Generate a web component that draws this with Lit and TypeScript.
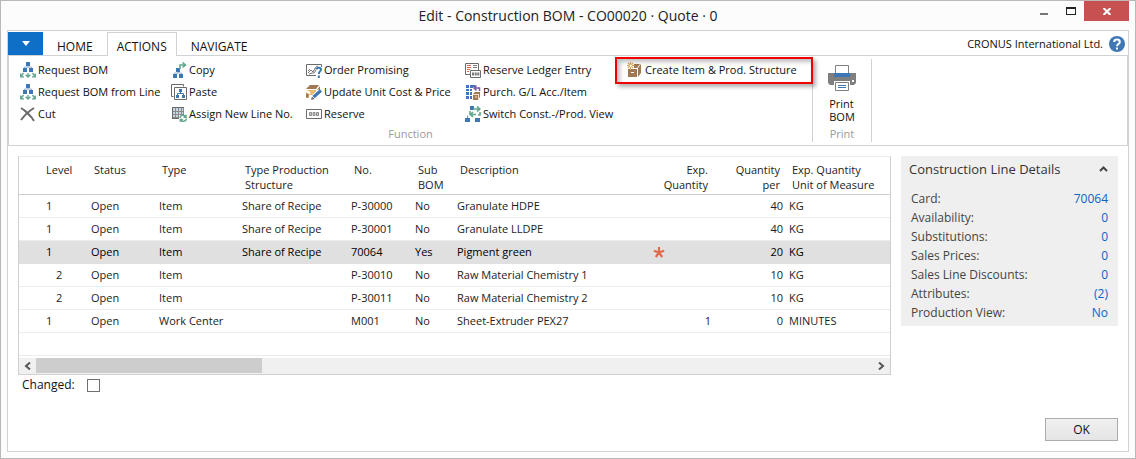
import { LitElement, html, css, svg, nothing } from "lit";
import { customElement, property } from "lit/decorators.js";
import { classMap } from "lit/directives/class-map.js";

const BLUE = "#3f77b5";
const GREEN = "#5fa58a";
const GREY = "#6b6b6b";
const BROWN = "#a07853";

const icons: Record<string, unknown> = {
  request: svg`
    <path fill=${BLUE} d="M6 0h4v4H6zM3 6h4v4H3zM9 6h4v4H9z"/>
    <path stroke="#8fb0d3" fill="none" d="M8 4v1.500M4.500 6V5h7v1"/>
    <path stroke=${GREEN} stroke-width="1.300" fill="none" d="M3.500 11L1 14.500M0.700 11.500v3.300h3.300M8 11v4M5.700 12.700L8 15l2.300-2.300M12.500 11l2.500 3.500M15.300 11.500v3.300H12"/>`,
  cut: svg`<path stroke=${GREY} stroke-width="2" fill="none" d="M1 2C6 5 11 10 14 15M14 2C9 5 4 10 1 14"/><path stroke=${GREY} stroke-width="1.500" d="M4 4l7 7"/>`,
  copy: svg`
    <path fill=${BLUE} d="M5 6h4v4H5zM2 12h4v4H2zM8 12h4v4H8z"/>
    <path stroke="#8fb0d3" fill="none" d="M7 10v1M3.500 12v-1h7v1"/>
    <path stroke=${GREEN} stroke-width="1.500" fill="none" d="M9 7V3h5M11.500 0.500L14.500 3L11.500 5.500"/>`,
  paste: svg`
    <path stroke=${GREY} fill="none" d="M2.500 12.500h-2V0.500h12v2"/>
    <path stroke=${GREY} fill="#fff" d="M3.500 3.500h12v12h-12z"/>
    <path fill=${BLUE} d="M8 5h3v3H8zM5 11h3v3H5zM11 11h3v3h-3z"/>
    <path stroke=${BLUE} fill="none" d="M9.500 8v1.500M6.500 11V9.500h6V11"/>`,
  assign: svg`
    <path fill="#c8d6e4" d="M1 2h12v9H1z"/>
    <path stroke="#8a8a8a" fill="none" d="M1.500 1.500h11v10h-11zM4.500 2v9M7.500 2v9M10.500 2v9M1.500 5.500h11M1.500 8.500h11"/>
    <path fill=${GREY} d="M1 1h12v1H1zM1 1h1v12H1zM1 12h7v1H1z"/>
    <path fill="#fff" d="M8 9h8v7H8z"/>
    <path stroke=${GREEN} stroke-width="1.400" fill="none" d="M9 12c0-3 4-3.500 5.500-1.500M15 8.800v2.400h-2.500M15.300 12.500c0 3-4 3.500-5.500 1.500M9.300 15.800v-2.400h2.500"/>`,
  promising: svg`
    <path stroke=${GREY} fill="#fff" d="M0.500 2.500h15v11h-15z"/>
    <path stroke="#777" fill="none" d="M2 11l3-3 2 2 3-5M10 5l2-1M2 9l2-2M3 12l3-1 2 0 2-3"/>
    <path fill="#fff" d="M10 5h6v11h-6z"/>
    <path stroke=${BLUE} stroke-width="2" fill="none" d="M10.500 7.500C10.500 5 15 5 15 7.500C15 9.500 12.800 9.300 12.800 12"/>
    <path fill=${BLUE} d="M11.800 13.500h2V16h-2z"/>`,
  update: svg`
    <path fill=${BROWN} d="M0 5L4 1h9l-3 4zM11 6l3-4v5z"/>
    <path fill="#e9b96e" d="M0 6h10v3l-5 5H0z"/>
    <path fill="#fff" d="M0 6l3 1 2 2-2 1-3-2zM3 11h3v5H3z"/>
    <path fill=${BROWN} d="M0 9l3 2-1 3-2-1z"/>
    <path stroke="#fff" stroke-width="5" d="M6 14.500L14 7"/>
    <path stroke=${BLUE} stroke-width="3" d="M7.500 13L15 6.500"/>
    <path fill=${GREY} d="M5 16l1-3.500 2.500 2.500z"/>`,
  reserve: svg`
    <path stroke=${GREY} fill="#fff" d="M0.500 3.500h15v9h-15z"/>
    <path stroke="#8a8a8a" fill="#ccc" d="M3.500 6.500h2v3h-2zM7 6.500h2v3H7zM10.500 6.500h2v3h-2z"/>`,
  ledger: svg`
    <path stroke=${GREY} fill="#fff" d="M0.500 1.500h13v11H0.500z"/>
    <path stroke="#d9694a" d="M2 3.500h4M2 5.500h4M2 7.500h3M2 9.500h2"/>
    <path stroke="#777" d="M8 3.500h4M8 5.500h4"/>
    <path stroke=${GREY} fill="#fff" d="M5.500 8.500h10v7h-10z"/>
    <path fill="#777" d="M7 10.500h2v3H7zM9.700 10.500h2v3h-2zM12.300 10.500h2v3h-2z"/>`,
  purch: svg`
    <path fill=${BLUE} d="M1 1h9v2H8v12H1z"/>
    <path stroke="#fff" d="M4.500 1v14M1 4.500h7M1 7.500h7M1 11.500h7"/>
    <path fill="#fff" d="M7 4h9v12H7z"/>
    <path fill="none" stroke="#7c57a5" stroke-width="1.500" d="M14.500 7V4H9M11.500 1.500L9 4l2.500 2.500"/>
    <path fill=${BROWN} d="M8 10l2-2h5v5l-2 3H8z"/>
    <path stroke="#f4e3cf" fill="none" d="M8 10.500h5M13.500 10v5M10 13h2"/>`,
  switch: svg`
    <path fill=${BLUE} d="M5 0h4v4H5zM0 12h5v4H0zM10 12h5v4h-5z"/>
    <path stroke="#6b95c4" fill="none" d="M2.500 12V9.500"/>
    <path stroke=${GREEN} stroke-width="1.600" fill="none" d="M8 3h6.500M12 0.500L14.800 3L12 5.500M5 5v3.500h6M8 6L5.500 8.500L8 11M15 6v3h-2"/>`,
  create: svg`
    <path fill=${BROWN} d="M1 7h9v8H1zM11 6l3-4v9l-3 4zM7 2h6l-3 4H7z"/>
    <path stroke="#fff" d="M4 10.500h3"/>
    <path fill="#fff" d="M1 1h6v6H1z"/>
    <path stroke="#dba24c" stroke-width="1.100" d="M3.500 0v2.500M3.500 5v2.500M0 3.500h2.500M5 3.500h2.500M1 1l1.800 1.800M6 1L4.400 2.600M1 6l1.800-1.800M6 6L4.400 4.400"/>`,
};

@customElement("ui-icon")
class UiIcon extends LitElement {
  @property() name = "";
  static styles = css`
    :host { display: block; flex: none; width: 16px; height: 16px; }
    svg { display: block; }
  `;
  render() {
    return html`<svg width="16" height="16" viewBox="0 0 16 16" aria-hidden="true">${icons[this.name]}</svg>`;
  }
}

interface Action { icon: string; label: string; marked?: boolean; }

const actionColumns: Action[][] = [
  [
    { icon: "request", label: "Request BOM" },
    { icon: "request", label: "Request BOM from Line" },
    { icon: "cut", label: "Cut" },
  ],
  [
    { icon: "copy", label: "Copy" },
    { icon: "paste", label: "Paste" },
    { icon: "assign", label: "Assign New Line No." },
  ],
  [
    { icon: "promising", label: "Order Promising" },
    { icon: "update", label: "Update Unit Cost & Price" },
    { icon: "reserve", label: "Reserve" },
  ],
  [
    { icon: "ledger", label: "Reserve Ledger Entry" },
    { icon: "purch", label: "Purch. G/L Acc./Item" },
    { icon: "switch", label: "Switch Const.-/Prod. View" },
  ],
  [{ icon: "create", label: "Create Item & Prod. Structure", marked: true }],
];

@customElement("action-ribbon")
class ActionRibbon extends LitElement {
  static styles = css`
    :host {
      display: flex;
      height: 89px;
      border: 1px solid #d2d2d2;
      border-top: none;
      background: #fff;
      font-size: 11px;
    }
    button {
      font: inherit;
      color: inherit;
      background: none;
      border: none;
      padding: 0;
      white-space: nowrap;
    }
    .group {
      display: flex;
      flex-direction: column;
      justify-content: space-between;
      margin: 3px 0;
      border-right: 1px solid #d2d2d2;
    }
    .columns {
      display: grid;
      grid-template-columns: 151px 135px 159px 162px 185px;
      padding-left: 11px;
    }
    .action {
      position: relative;
      display: flex;
      align-items: center;
      gap: 2px;
      height: 22px;
    }
    .marked { width: fit-content; }
    .marked::after {
      content: "";
      position: absolute;
      inset: -2px -16px -3px -12px;
      border: 2px solid #f00000;
      box-shadow: 3px 3px 4px rgba(0, 0, 0, 0.3), inset 3px 3px 4px rgba(0, 0, 0, 0.25);
    }
    .caption {
      line-height: 16px;
      text-align: center;
      color: #9a9a9a;
    }
    .print { width: 58px; }
    .large {
      display: flex;
      flex-direction: column;
      align-items: center;
      gap: 6px;
      line-height: 13px;
      padding-top: 6px;
      text-align: left;
    }
  `;
  render() {
    return html`
      <div class="group">
        <div class="columns">
          ${actionColumns.map(
            (column) => html`<div>
              ${column.map(
                (a) => html`<button class=${classMap({ action: true, marked: !!a.marked })}>
                  <ui-icon name=${a.icon}></ui-icon><span>${a.label}</span>
                </button>`
              )}
            </div>`
          )}
        </div>
        <div class="caption">Function</div>
      </div>
      <div class="group print">
        <button class="large">
          <svg width="28" height="26" viewBox="0 0 28 26" aria-hidden="true">
            <path fill="#7f7f7f" d="M0 8h28v10l-2 2H2l-2-2z" />
            <path fill="#fff" stroke="#7f7f7f" d="M7.500 0.500h13v9h-13z" />
            <path fill="#3f77b5" d="M6 8h16v4H6z" />
            <path fill="#fff" d="M24 15h2v2h-2zM6 16h16v5H6z" />
            <path fill="#fff" stroke="#7f7f7f" d="M7.500 17.500h13v8h-13z" />
            <path stroke="#3f77b5" d="M10 20.500h8M10 22.500h8" />
          </svg>
          <span>Print<br />BOM</span>
        </button>
        <div class="caption">Print</div>
      </div>
    `;
  }
}

interface Line {
  level: number; type: string; structure?: string; no: string; sub: string;
  description: string; expected?: string; per: string; unit: string; selected?: boolean;
}

const lines: Line[] = [
  { level: 1, type: "Item", structure: "Share of Recipe", no: "P-30000", sub: "No", description: "Granulate HDPE", per: "40", unit: "KG" },
  { level: 1, type: "Item", structure: "Share of Recipe", no: "P-30001", sub: "No", description: "Granulate LLDPE", per: "40", unit: "KG" },
  { level: 1, type: "Item", structure: "Share of Recipe", no: "70064", sub: "Yes", description: "Pigment green", per: "20", unit: "KG", selected: true },
  { level: 2, type: "Item", no: "P-30010", sub: "No", description: "Raw Material Chemistry 1", per: "10", unit: "KG" },
  { level: 2, type: "Item", no: "P-30011", sub: "No", description: "Raw Material Chemistry 2", per: "10", unit: "KG" },
  { level: 1, type: "Work Center", no: "M001", sub: "No", description: "Sheet-Extruder PEX27", expected: "1", per: "0", unit: "MINUTES" },
];

@customElement("bom-lines")
class BomLines extends LitElement {
  static styles = css`
    :host {
      display: block;
      border: 1px solid #cfcfcf;
      border-top-color: #ececec;
      color: #1c1c1c;
      font-size: 11px;
    }
    table {
      width: 100%;
      table-layout: fixed;
      border-collapse: separate;
      border-spacing: 0;
    }
    th, td {
      padding: 0 3px;
      text-align: left;
      font-weight: normal;
      white-space: nowrap;
      box-sizing: border-box;
    }
    th {
      height: 38px;
      padding: 5px 6px 2px;
      line-height: 15px;
      vertical-align: top;
      border-bottom: 1px solid #cfcfcf;
    }
    td { height: 23px; border-bottom: 1px solid #ececec; }
    .level { width: 69px; }
    .status { width: 68px; }
    .type { width: 83px; }
    .structure { width: 109px; }
    .no { width: 64px; }
    .sub { width: 42px; }
    .expected { width: 68px; }
    .per { width: 72px; }
    .unit { width: 104px; }
    th.level, td.level { padding-left: 27px; }
    td.nested { padding-left: 37px; }
    .number { text-align: right; }
    .selected td { background: #e0e0e0; border-bottom-color: #e0e0e0; color: #000; }
    .required { display: block; margin-left: 4px; }
    .scrollbar {
      display: flex;
      height: 16px;
      margin-top: 2px;
      background: #f0f0f0;
    }
    .arrow {
      display: grid;
      place-items: center;
      width: 17px;
      padding: 0;
      border: none;
      background: none;
    }
    .track { flex: 1; }
    .thumb { width: 27%; height: 15px; background: #cdcdcd; }
  `;
  render() {
    return html`
      <table>
        <thead>
          <tr>
            <th class="level">Level</th>
            <th class="status">Status</th>
            <th class="type">Type</th>
            <th class="structure">Type Production<br />Structure</th>
            <th class="no">No.</th>
            <th class="sub">Sub<br />BOM</th>
            <th>Description</th>
            <th class="expected number">Exp.<br />Quantity</th>
            <th class="per number">Quantity<br />per</th>
            <th class="unit">Exp. Quantity<br />Unit of Measure</th>
          </tr>
        </thead>
        <tbody>
          ${lines.map(
            (l) => html`<tr class=${classMap({ selected: !!l.selected })}>
              <td class=${classMap({ level: true, nested: l.level > 1 })}>${l.level}</td>
              <td>Open</td>
              <td>${l.type}</td>
              <td>${l.structure ?? nothing}</td>
              <td>${l.no}</td>
              <td>${l.sub}</td>
              <td>${l.description}</td>
              <td class="number">
                ${l.selected
                  ? html`<svg class="required" width="12" height="12" viewBox="0 0 12 12" role="img" aria-label="Required">
                      <path stroke="#e0694a" stroke-width="2.200" d="M6 6.500V1M6 6.500L0.800 4.700M6 6.500L11.200 4.700M6 6.500L2.800 11M6 6.500L9.200 11" />
                    </svg>`
                  : l.expected ?? nothing}
              </td>
              <td class="number">${l.per}</td>
              <td>${l.unit}</td>
            </tr>`
          )}
          <tr><td colspan="10"></td></tr>
        </tbody>
      </table>
      <div class="scrollbar">
        <button class="arrow" aria-label="Scroll left">
          <svg width="7" height="8" viewBox="0 0 7 8"><path fill="none" stroke="#555" stroke-width="2" d="M6 0.500L2 4l4 3.500" /></svg>
        </button>
        <div class="track"><div class="thumb"></div></div>
        <button class="arrow" aria-label="Scroll right">
          <svg width="7" height="8" viewBox="0 0 7 8"><path fill="none" stroke="#555" stroke-width="2" d="M1 0.500L5 4L1 7.500" /></svg>
        </button>
      </div>
    `;
  }
}

const facts: [string, string][] = [
  ["Card:", "70064"],
  ["Availability:", "0"],
  ["Substitutions:", "0"],
  ["Sales Prices:", "0"],
  ["Sales Line Discounts:", "0"],
  ["Attributes:", "(2)"],
  ["Production View:", "No"],
];

@customElement("line-details")
class LineDetails extends LitElement {
  static styles = css`
    :host { display: block; padding: 0 10px 4px; background: #efefef; color: #444; }
    header {
      display: flex;
      align-items: center;
      justify-content: space-between;
      height: 26px;
      margin: 0 0 7px -2px;
    }
    h2 { margin: 0; font-size: 13px; font-weight: normal; color: #333; }
    button { display: grid; padding: 0; border: none; background: none; }
    dl { margin: 0; }
    .fact { display: flex; justify-content: space-between; line-height: 19px; }
    dd { margin: 0; }
    a { color: #0b62cb; text-decoration: none; }
  `;
  render() {
    return html`
      <header>
        <h2>Construction Line Details</h2>
        <button aria-label="Collapse">
          <svg width="9" height="6" viewBox="0 0 9 6"><path fill="none" stroke="#444" stroke-width="2" d="M1 5l3.500-3.500L8 5" /></svg>
        </button>
      </header>
      <dl>
        ${facts.map(([k, v]) => html`<div class="fact"><dt>${k}</dt><dd><a href="#">${v}</a></dd></div>`)}
      </dl>
    `;
  }
}

@customElement("app-root")
class AppRoot extends LitElement {
  static styles = css`
    :host {
      display: flex;
      flex-direction: column;
      box-sizing: border-box;
      min-height: 100vh;
      padding: 0 6px;
      padding-bottom: 6px;
      border: 1px solid #b9b9b9;
      background: #fcfcfc;
      color: #111;
      font: 12px/16px "Open Sans", "Noto Sans", sans-serif;
    }
    button { font: inherit; color: inherit; }
    .titlebar {
      display: grid;
      grid-template-columns: 1fr auto 1fr;
      height: 29px;
    }
    h1 {
      grid-column: 2;
      margin: 0;
      font-size: 14px;
      line-height: 29px;
      font-weight: normal;
      color: #222;
    }
    .controls { display: flex; justify-content: flex-end; }
    .control {
      display: grid;
      place-items: center;
      width: 27px;
      height: 20px;
      padding: 0;
      border: none;
      background: none;
    }
    .close { width: 45px; background: #c75050; }
    .frame {
      display: flex;
      flex-direction: column;
      flex: 1;
      border: 1px solid #d2d2d2;
      background: #fff;
    }
    .tabs {
      display: flex;
      height: 25px;
      padding-top: 1px;
      box-sizing: border-box;
      border-bottom: 1px solid #d2d2d2;
    }
    .menu {
      display: grid;
      place-items: center;
      width: 35px;
      padding: 0;
      border: none;
      background: #0f6fc6;
    }
    .tab {
      height: 24px;
      padding: 4px 13px 0;
      border: 1px solid transparent;
      border-bottom: none;
      background: none;
    }
    .current { padding: 4px 9px 0; background: #fff; border-color: #d2d2d2; }
    .company {
      display: flex;
      align-items: center;
      gap: 6px;
      margin-left: auto;
      padding-right: 3px;
      font-size: 11px;
    }
    .help { display: grid; padding: 0; border: none; background: none; }
    .content {
      display: grid;
      grid-template-columns: minmax(0, 1fr) 217px;
      align-items: start;
      gap: 10px;
      padding: 10px 10px 0;
    }
    .changed { display: flex; align-items: center; gap: 12px; padding: 2px 14px; }
    .changed input {
      appearance: none;
      width: 13px;
      height: 13px;
      margin: 0;
      border: 1px solid #707070;
      background: #fff;
    }
    footer { display: flex; justify-content: flex-end; margin-top: auto; padding: 0 10px 10px; }
    .ok {
      width: 73px;
      height: 23px;
      padding: 0;
      border: 1px solid #acacac;
      background: linear-gradient(#f0f0f0, #e5e5e5);
    }
  `;
  render() {
    return html`
      <div class="titlebar">
        <h1>Edit - Construction BOM - CO00020 · Quote · 0</h1>
        <div class="controls">
          <button class="control" aria-label="Minimize">
            <svg width="10" height="8" viewBox="0 0 10 8"><path fill="#777" d="M1 6h8v2H1z" /></svg>
          </button>
          <button class="control" aria-label="Maximize">
            <svg width="10" height="8" viewBox="0 0 10 8"><path fill="#222" d="M0 0h10v8H0zM1 2v5h8V2z" fill-rule="evenodd" /></svg>
          </button>
          <button class="control close" aria-label="Close">
            <svg width="8" height="7" viewBox="0 0 8 7"><path stroke="#fff" stroke-width="2" d="M0.500 0l7 7M7.500 0l-7 7" /></svg>
          </button>
        </div>
      </div>
      <div class="frame">
        <nav class="tabs">
          <button class="menu" aria-label="Application menu">
            <svg width="8" height="5" viewBox="0 0 8 5"><path fill="#fff" d="M0 0h8L4 5z" /></svg>
          </button>
          <button class="tab">HOME</button>
          <button class="tab current">ACTIONS</button>
          <button class="tab">NAVIGATE</button>
          <div class="company">
            <span>CRONUS International Ltd.</span>
            <button class="help" aria-label="Help">
              <svg width="16" height="16" viewBox="0 0 16 16">
                <circle cx="8" cy="8" r="8" fill="#3f77b5" />
                <path fill="none" stroke="#fff" stroke-width="2" d="M5.200 6C5.200 2.800 10.800 2.800 10.800 6C10.800 8 8 7.800 8 10.300" />
                <path fill="#fff" d="M7 11.500h2v2H7z" />
              </svg>
            </button>
          </div>
        </nav>
        <action-ribbon></action-ribbon>
        <main class="content">
          <bom-lines></bom-lines>
          <line-details></line-details>
        </main>
        <div class="changed">
          <label for="changed">Changed:</label>
          <input id="changed" type="checkbox" />
        </div>
        <footer><button class="ok">OK</button></footer>
      </div>
    `;
  }
}
